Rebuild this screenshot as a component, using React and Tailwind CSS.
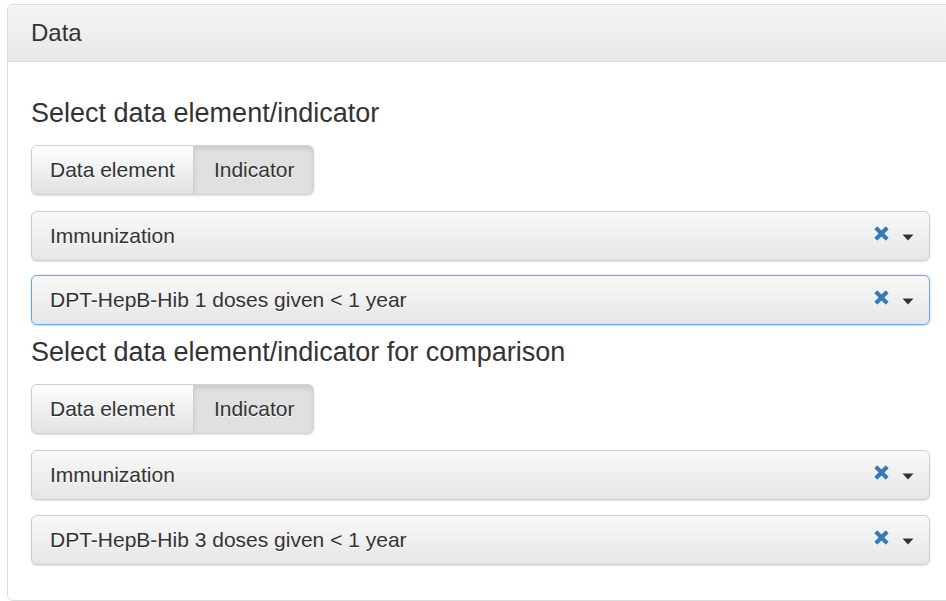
import React from "react";

const font = { fontFamily: '"Liberation Sans", Arial, sans-serif' };

function ClearIcon() {
  return (
    <svg width="17" height="17" viewBox="0 0 17 17" className="block">
      <path d="M2.5 2.5 L14.5 14.5 M14.5 2.5 L2.5 14.5" stroke="#fff" strokeWidth="5.6" strokeOpacity="0.6" fill="none" />
      <path d="M2.8 2.8 L14.2 14.2 M14.2 2.8 L2.8 14.2" stroke="#3579b8" strokeWidth="4.2" strokeLinecap="butt" fill="none" />
    </svg>
  );
}

function Caret() {
  return (
    <svg width="12" height="7" viewBox="0 0 12 7" className="block">
      <path d="M0.5 0.5 L11.5 0.5 L6 6.5 Z" fill="#333" />
    </svg>
  );
}

function Toggle() {
  return (
    <div className="flex h-[50px] w-fit rounded-[6px] shadow-[0_1px_2px_rgba(0,0,0,0.12)]">
      <div className="flex items-center px-[18px] border border-[#cfcfcf] rounded-l-[6px] bg-linear-to-b from-white to-[#e2e2e2] text-[21px] text-[#333] [text-shadow:0_1px_0_#fff]">
        Data element
      </div>
      <div className="flex items-center pl-[20px] pr-[19px] border border-l-0 border-[#d4d4d4] rounded-r-[6px] bg-[#e0e0e0] shadow-[inset_0_3px_5px_rgba(0,0,0,0.1)] text-[21px] text-[#333] [text-shadow:0_1px_0_#fff]">
        Indicator
      </div>
    </div>
  );
}

function Select({ label, focused }) {
  return (
    <div
      className={
        "flex items-center h-[50px] w-[899px] pl-[18px] pr-[15px] rounded-[6px] border bg-linear-to-b from-[#f9f9f9] to-[#e6e6e6] text-[21px] text-[#333] [text-shadow:0_1px_0_#fff] " +
        (focused
          ? "border-[#6aa8ec] shadow-[0_0_2px_rgba(102,175,233,0.6),0_1px_2px_rgba(0,0,0,0.1)]"
          : "border-[#cdcdcd] shadow-[0_1px_2px_rgba(0,0,0,0.12)]")
      }
    >
      <span className="flex-1">{label}</span>
      <span className="mr-[12px] -mt-[5px]">
        <ClearIcon />
      </span>
      <span className="mt-[2px]">
        <Caret />
      </span>
    </div>
  );
}

export default function App() {
  return (
    <div className="w-[946px] h-[601px] overflow-hidden bg-white" style={font}>
      <div className="ml-[7px] mt-[4px] w-[960px] border border-[#dcdcdc] rounded-[6px]">
        <div className="flex items-center h-[57px] px-[23px] border-b border-[#dcdcdc] rounded-t-[6px] bg-linear-to-b from-[#f5f5f5] to-[#e8e8e8] text-[24px] text-[#333]">
          Data
        </div>
        <div className="px-[23px] pt-[36px] pb-[35px]">
          <h4 className="text-[27px] leading-[30px] text-[#333] mb-[17px]">Select data element/indicator</h4>
          <Toggle />
          <div className="mt-[16px] flex flex-col gap-[14px]">
            <Select label="Immunization" />
            <Select label="DPT-HepB-Hib 1 doses given < 1 year" focused />
          </div>
          <h4 className="mt-[12px] text-[27px] leading-[30px] text-[#333] mb-[17px]">
            Select data element/indicator for comparison
          </h4>
          <Toggle />
          <div className="mt-[16px] flex flex-col gap-[15px]">
            <Select label="Immunization" />
            <Select label="DPT-HepB-Hib 3 doses given < 1 year" />
          </div>
        </div>
      </div>
    </div>
  );
}
